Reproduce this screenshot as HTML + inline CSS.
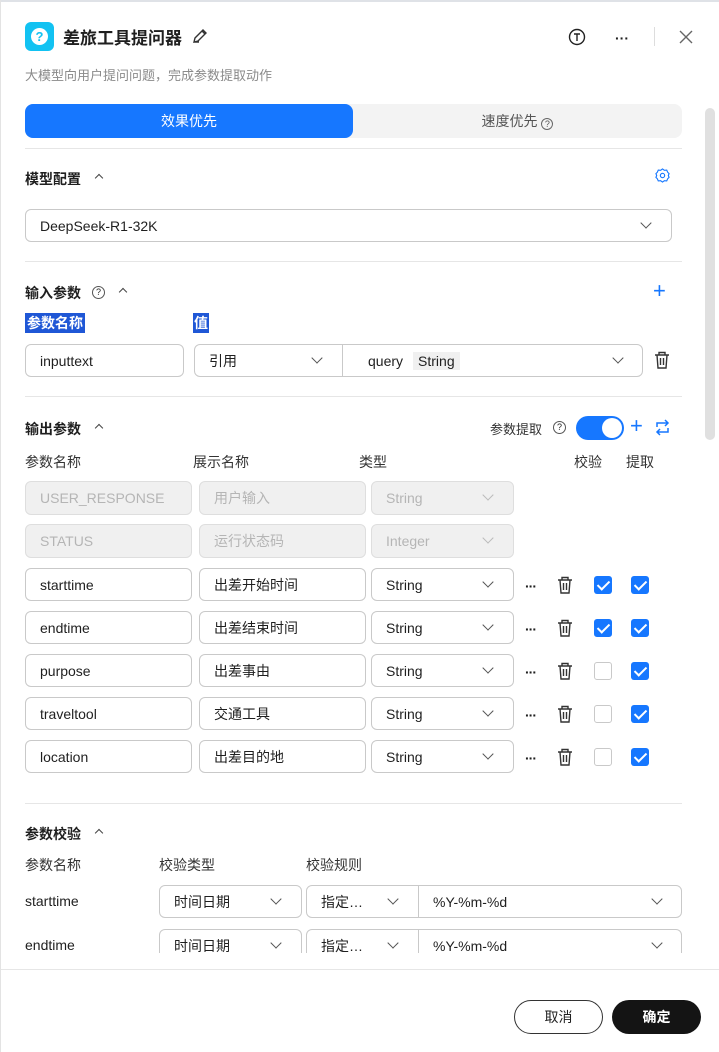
<!DOCTYPE html><html><head><meta charset="utf-8"><style>
*{box-sizing:border-box;margin:0;padding:0}
body{width:719px;height:1052px;overflow:hidden;background:#fff;font-family:"Liberation Sans","Noto Sans CJK SC",sans-serif;color:#1f1f1f;position:relative;font-size:14px}
.a{position:absolute}
.in{position:absolute;border:1px solid #c9c9c9;border-radius:6px;background:#fff;padding-left:14px;display:flex;align-items:center;font-size:14px;color:#1f1f1f}
.dis{background:#f0f0f0;border-color:#dedede;color:#b5b5b5}
.hr{position:absolute;left:25px;width:657px;height:1px;background:#e6e6e6}
.h{position:absolute;font-size:14px;font-weight:bold}
.lb{position:absolute;font-size:14px;color:#333}
.chev{position:absolute;width:8px;height:8px;border-right:1.5px solid #555;border-bottom:1.5px solid #555;transform:rotate(45deg)}
.dchev{border-color:#bbb}
.up{position:absolute;width:6px;height:6px;border-left:1.5px solid #444;border-top:1.5px solid #444;transform:rotate(45deg)}
.cb{position:absolute;width:18px;height:18px;border-radius:3px;background:#1677ff}
.cb::after{content:"";position:absolute;left:6px;top:2px;width:5px;height:10px;border-right:2px solid #fff;border-bottom:2px solid #fff;transform:rotate(45deg)}
.ucb{position:absolute;width:18px;height:18px;border-radius:3px;border:1px solid #c9c9c9;background:#fff}
.dots{position:absolute;font-size:14px;font-weight:bold;letter-spacing:-1px}
</style></head><body>
<div class="a" style="left:0;top:0;width:719px;height:2px;background:#dfe2e7"></div>
<div class="a" style="left:0;top:0;width:1px;height:1052px;background:#e3e3e3"></div>
<div class="a" style="left:25px;top:22px;width:29px;height:29px;border-radius:6px;background:#12c2f2"></div>
<div class="a" style="left:31px;top:28px;width:17px;height:17px;border-radius:50%;background:#fff;color:#12c2f2;font-weight:bold;font-size:13px;text-align:center;line-height:17px">?</div>
<div class="a" style="left:63px;top:24px;font-size:17px;font-weight:bold">差旅工具提问器</div>
<svg class="a" style="left:191px;top:27px" width="18" height="18" viewBox="0 0 18 18" fill="none" stroke="#333" stroke-width="1.4"><path d="M3 15l1-4 8-8 3 3-8 8z M11 4l3 3 M3 15h5"/></svg>
<svg class="a" style="left:568px;top:28px" width="18" height="18"><circle cx="9" cy="9" r="7.5" fill="none" stroke="#222" stroke-width="1.4"/><path d="M6 6h6M9 6v7" stroke="#222" stroke-width="1.4"/></svg>
<div class="a" style="left:615px;top:30px;font-weight:bold;font-size:14px">···</div>
<div class="a" style="left:654px;top:27px;width:1px;height:19px;background:#ddd"></div>
<svg class="a" style="left:679px;top:30px" width="14" height="14"><path d="M1 1l12 12M13 1L1 13" stroke="#666" stroke-width="1.4"/></svg>
<div class="a" style="left:25px;top:65px;font-size:13px;color:#8a8a8a">大模型向用户提问问题，完成参数提取动作</div>
<div class="a" style="left:25px;top:104px;width:657px;height:34px;background:#f3f3f3;border-radius:8px"></div>
<div class="a" style="left:25px;top:104px;width:328px;height:34px;background:#1677ff;border-radius:8px;color:#fff;text-align:center;line-height:34px;font-size:14px">效果优先</div>
<div class="a" style="left:353px;top:104px;width:329px;height:34px;text-align:center;line-height:34px;color:#555;font-size:14px">速度优先 <span style="display:inline-block;width:12px;height:12px;border:1px solid #666;border-radius:50%;font-size:9px;line-height:10px;vertical-align:-1px">?</span></div>
<div class="a" style="left:705px;top:108px;width:10px;height:332px;border-radius:5px;background:#e0e0e0"></div>
<div class="hr" style="top:148px"></div>
<div class="h" style="left:25px;top:169px">模型配置</div><div class="up" style="left:96px;top:175px"></div>
<svg class="a" style="left:655px;top:168px" width="15" height="15" viewBox="0 0 16 16"><path d="M8 1l2 1.5 2.5-.3 1 2.3 1.5 1.5-.8 2 .8 2-1.5 1.5-1 2.3-2.5-.3L8 15l-2-1.5-2.5.3-1-2.3L1 10l.8-2L1 6l1.5-1.5 1-2.3 2.5.3z" fill="none" stroke="#1677ff" stroke-width="1.2"/><circle cx="8" cy="8" r="2.3" fill="none" stroke="#1677ff" stroke-width="1.2"/></svg>
<div class="in" style="left:25px;top:209px;width:647px;height:33px">DeepSeek-R1-32K</div><div class="chev" style="left:642px;top:219px"></div>
<div class="hr" style="top:261px"></div>
<div class="h" style="left:25px;top:283px">输入参数</div>
<div class="a" style="left:92px;top:286px;width:13px;height:13px;border:1px solid #555;border-radius:50%;font-size:9px;text-align:center;line-height:11px">?</div>
<div class="up" style="left:120px;top:289px"></div>
<div class="a" style="left:653px;top:280px;font-size:22px;color:#1677ff;line-height:22px">+</div>
<div class="a" style="left:25px;top:313px;height:20px;background:#1f57d6;color:#fff;font-weight:bold;font-size:14px;padding:0 2px;line-height:20px">参数名称</div>
<div class="a" style="left:193px;top:313px;height:20px;background:#1f57d6;color:#fff;font-weight:bold;font-size:14px;padding:0 1px;line-height:20px">值</div>
<div class="in" style="left:25px;top:344px;width:159px;height:33px">inputtext</div>
<div class="in" style="left:194px;top:344px;width:149px;height:33px;border-radius:6px 0 0 6px">引用</div><div class="chev" style="left:313px;top:354px"></div>
<div class="in" style="left:342px;top:344px;width:301px;height:33px;border-radius:0 6px 6px 0;padding-left:25px">query <span style="background:#f0f0f0;padding:1px 5px;margin-left:10px">String</span></div><div class="chev" style="left:614px;top:354px"></div>
<svg class="a" style="left:654px;top:351px" width="16" height="18" viewBox="0 0 16 18" fill="none" stroke="#333" stroke-width="1.4"><path d="M1 4h14M5 4V1.5h6V4M3 4l1 13h8l1-13M6.5 7v7M9.5 7v7"/></svg>
<div class="hr" style="top:396px"></div>
<div class="h" style="left:25px;top:419px">输出参数</div><div class="up" style="left:96px;top:425px"></div>
<div class="lb" style="left:490px;top:419px;font-size:13px">参数提取</div>
<div class="a" style="left:553px;top:421px;width:13px;height:13px;border:1px solid #555;border-radius:50%;font-size:9px;text-align:center;line-height:11px">?</div>
<div class="a" style="left:576px;top:416px;width:48px;height:24px;border-radius:12px;background:#1677ff"></div>
<div class="a" style="left:602px;top:418px;width:20px;height:20px;border-radius:50%;background:#fff"></div>
<div class="a" style="left:630px;top:415px;font-size:22px;color:#1677ff;line-height:22px">+</div>
<svg class="a" style="left:654px;top:419px" width="17" height="17" viewBox="0 0 17 17" fill="none" stroke="#1677ff" stroke-width="1.5"><path d="M3 8V4h11M11 1l3 3-3 3M14 9v4H3M6 16l-3-3 3-3"/></svg>
<div class="lb" style="left:25px;top:452px">参数名称</div><div class="lb" style="left:193px;top:452px">展示名称</div><div class="lb" style="left:359px;top:452px">类型</div><div class="lb" style="left:574px;top:452px">校验</div><div class="lb" style="left:626px;top:452px">提取</div>

<div class="in dis" style="left:25px;top:481px;width:167px;height:34px">USER_RESPONSE</div><div class="in dis" style="left:199px;top:481px;width:167px;height:34px">用户输入</div><div class="in dis" style="left:371px;top:481px;width:143px;height:34px">String</div><div class="chev dchev" style="left:484px;top:491px"></div>
<div class="in dis" style="left:25px;top:524px;width:167px;height:34px">STATUS</div><div class="in dis" style="left:199px;top:524px;width:167px;height:34px">运行状态码</div><div class="in dis" style="left:371px;top:524px;width:143px;height:34px">Integer</div><div class="chev dchev" style="left:484px;top:534px"></div>

<div class="in" style="left:25px;top:568px;width:167px;height:33px">starttime</div><div class="in" style="left:199px;top:568px;width:167px;height:33px">出差开始时间</div><div class="in" style="left:371px;top:568px;width:143px;height:33px">String</div><div class="chev" style="left:484px;top:578px"></div><div class="dots" style="left:525px;top:578px">···</div><svg class="a" style="left:557px;top:576px" width="16" height="18" viewBox="0 0 16 18" fill="none" stroke="#333" stroke-width="1.4"><path d="M1 4h14M5 4V1.5h6V4M3 4l1 13h8l1-13M6.5 7v7M9.5 7v7"/></svg><div class="cb" style="left:594px;top:576px"></div><div class="cb" style="left:631px;top:576px"></div>
<div class="in" style="left:25px;top:611px;width:167px;height:33px">endtime</div><div class="in" style="left:199px;top:611px;width:167px;height:33px">出差结束时间</div><div class="in" style="left:371px;top:611px;width:143px;height:33px">String</div><div class="chev" style="left:484px;top:621px"></div><div class="dots" style="left:525px;top:621px">···</div><svg class="a" style="left:557px;top:619px" width="16" height="18" viewBox="0 0 16 18" fill="none" stroke="#333" stroke-width="1.4"><path d="M1 4h14M5 4V1.5h6V4M3 4l1 13h8l1-13M6.5 7v7M9.5 7v7"/></svg><div class="cb" style="left:594px;top:619px"></div><div class="cb" style="left:631px;top:619px"></div>
<div class="in" style="left:25px;top:654px;width:167px;height:33px">purpose</div><div class="in" style="left:199px;top:654px;width:167px;height:33px">出差事由</div><div class="in" style="left:371px;top:654px;width:143px;height:33px">String</div><div class="chev" style="left:484px;top:664px"></div><div class="dots" style="left:525px;top:664px">···</div><svg class="a" style="left:557px;top:662px" width="16" height="18" viewBox="0 0 16 18" fill="none" stroke="#333" stroke-width="1.4"><path d="M1 4h14M5 4V1.5h6V4M3 4l1 13h8l1-13M6.5 7v7M9.5 7v7"/></svg><div class="ucb" style="left:594px;top:662px"></div><div class="cb" style="left:631px;top:662px"></div>
<div class="in" style="left:25px;top:697px;width:167px;height:33px">traveltool</div><div class="in" style="left:199px;top:697px;width:167px;height:33px">交通工具</div><div class="in" style="left:371px;top:697px;width:143px;height:33px">String</div><div class="chev" style="left:484px;top:707px"></div><div class="dots" style="left:525px;top:707px">···</div><svg class="a" style="left:557px;top:705px" width="16" height="18" viewBox="0 0 16 18" fill="none" stroke="#333" stroke-width="1.4"><path d="M1 4h14M5 4V1.5h6V4M3 4l1 13h8l1-13M6.5 7v7M9.5 7v7"/></svg><div class="ucb" style="left:594px;top:705px"></div><div class="cb" style="left:631px;top:705px"></div>
<div class="in" style="left:25px;top:740px;width:167px;height:33px">location</div><div class="in" style="left:199px;top:740px;width:167px;height:33px">出差目的地</div><div class="in" style="left:371px;top:740px;width:143px;height:33px">String</div><div class="chev" style="left:484px;top:750px"></div><div class="dots" style="left:525px;top:750px">···</div><svg class="a" style="left:557px;top:748px" width="16" height="18" viewBox="0 0 16 18" fill="none" stroke="#333" stroke-width="1.4"><path d="M1 4h14M5 4V1.5h6V4M3 4l1 13h8l1-13M6.5 7v7M9.5 7v7"/></svg><div class="ucb" style="left:594px;top:748px"></div><div class="cb" style="left:631px;top:748px"></div>

<div class="hr" style="top:803px"></div>
<div class="h" style="left:25px;top:824px">参数校验</div><div class="up" style="left:96px;top:830px"></div>
<div class="lb" style="left:25px;top:855px">参数名称</div><div class="lb" style="left:159px;top:855px">校验类型</div><div class="lb" style="left:306px;top:855px">校验规则</div>
<div class="lb" style="left:25px;top:893px;color:#1f1f1f">starttime</div>
<div class="in" style="left:159px;top:885px;width:143px;height:33px">时间日期</div><div class="chev" style="left:272px;top:895px"></div>
<div class="in" style="left:306px;top:885px;width:113px;height:33px;border-radius:6px 0 0 6px">指定…</div><div class="chev" style="left:389px;top:895px"></div>
<div class="in" style="left:418px;top:885px;width:264px;height:33px;border-radius:0 6px 6px 0">%Y-%m-%d</div><div class="chev" style="left:653px;top:895px"></div>
<div class="lb" style="left:25px;top:937px;color:#1f1f1f">endtime</div>
<div class="in" style="left:159px;top:929px;width:143px;height:33px">时间日期</div><div class="chev" style="left:272px;top:939px"></div>
<div class="in" style="left:306px;top:929px;width:113px;height:33px;border-radius:6px 0 0 6px">指定…</div><div class="chev" style="left:389px;top:939px"></div>
<div class="in" style="left:418px;top:929px;width:264px;height:33px;border-radius:0 6px 6px 0">%Y-%m-%d</div><div class="chev" style="left:653px;top:939px"></div>
<div class="a" style="left:1px;top:953px;width:718px;height:99px;background:#fff"></div>
<div class="a" style="left:1px;top:969px;width:718px;height:1px;background:#e6e6e6"></div>
<div class="a" style="left:514px;top:1000px;width:89px;height:34px;border:1px solid #333;border-radius:17px;text-align:center;line-height:32px">取消</div>
<div class="a" style="left:612px;top:1000px;width:89px;height:34px;background:#141414;border-radius:17px;color:#fff;text-align:center;line-height:34px;font-weight:bold">确定</div>
</body></html>
